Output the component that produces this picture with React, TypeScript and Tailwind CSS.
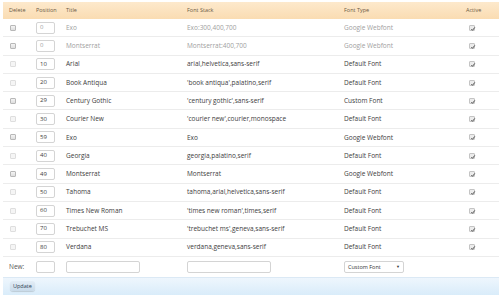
import React from 'react';

type Font = {
  pos: string;
  title: string;
  stack: string;
  type: string;
  muted?: boolean;
  removable?: boolean;
};

const fonts: Font[] = [
  { pos: '0', title: 'Exo', stack: 'Exo:300,400,700', type: 'Google Webfont', muted: true, removable: true },
  { pos: '0', title: 'Montserrat', stack: 'Montserrat:400,700', type: 'Google Webfont', muted: true, removable: true },
  { pos: '10', title: 'Arial', stack: 'arial,helvetica,sans-serif', type: 'Default Font' },
  { pos: '20', title: 'Book Antiqua', stack: "'book antiqua',palatino,serif", type: 'Default Font' },
  { pos: '29', title: 'Century Gothic', stack: "'century gothic',sans-serif", type: 'Custom Font', removable: true },
  { pos: '30', title: 'Courier New', stack: "'courier new',courier,monospace", type: 'Default Font' },
  { pos: '59', title: 'Exo', stack: 'Exo', type: 'Google Webfont', removable: true },
  { pos: '40', title: 'Georgia', stack: 'georgia,palatino,serif', type: 'Default Font' },
  { pos: '49', title: 'Montserrat', stack: 'Montserrat', type: 'Google Webfont', removable: true },
  { pos: '50', title: 'Tahoma', stack: 'tahoma,arial,helvetica,sans-serif', type: 'Default Font' },
  { pos: '60', title: 'Times New Roman', stack: "'times new roman',times,serif", type: 'Default Font' },
  { pos: '70', title: 'Trebuchet MS', stack: "'trebuchet ms',geneva,sans-serif", type: 'Default Font' },
  { pos: '80', title: 'Verdana', stack: 'verdana,geneva,sans-serif', type: 'Default Font' },
];

const grid = 'grid grid-cols-[30px_30px_121px_157px_122px_1fr] items-center';

const Box = ({ light }: { light?: boolean }) => (
  <span
    className={`block w-[6px] h-[6px] rounded-[1px] border ${
      light ? 'border-[#dedede] bg-[#f5f5f5]' : 'border-[#b8b8b8] bg-gradient-to-b from-[#f4f4f4] to-[#dedede]'
    }`}
  />
);

const Checked = () => (
  <span className="block w-[6px] h-[6px] rounded-[1px] border border-[#c4c4c4] bg-[#ececec] relative">
    <svg viewBox="0 0 6 6" className="absolute inset-0 w-[6px] h-[6px]">
      <path d="M1.3 3.1 L2.5 4.3 L4.8 1.4" stroke="#444" strokeWidth="0.9" fill="none" />
    </svg>
  </span>
);

export default function App() {
  return (
    <div className="w-[502px] h-[300px] bg-white pt-[2px] px-[3px]" style={{ fontFamily: '"Open Sans", sans-serif' }}>
      <div className={`${grid} h-[17px] bg-gradient-to-b from-[#fde9cc] to-[#fadcb2] text-[5.5px] text-[#6b5a45]`}>
        <span className="pl-[6px]">Delete</span>
        <span className="pl-[3px]">Position</span>
        <span className="pl-[3px]">Title</span>
        <span className="pl-[3px]">Font Stack</span>
        <span className="pl-[3px]">Font Type</span>
        <span className="pl-[3px]">Active</span>
      </div>
      {fonts.map((f, i) => (
        <div
          key={i}
          className={`${grid} h-[18.3px] border-b border-[#ececec] text-[6.5px] ${f.muted ? 'text-[#a0a0a0]' : 'text-[#3c3c3c]'}`}
        >
          <span className="pl-[7px]">
            <Box light={!f.removable} />
          </span>
          <span className="pl-[3px]">
            <span className="flex items-center w-[19px] h-[12px] border border-[#d4d4d4] rounded-[2px] bg-white pl-[3px] text-[6px]">
              {f.pos}
            </span>
          </span>
          <span className="pl-[3px]">{f.title}</span>
          <span className="pl-[3px]">{f.stack}</span>
          <span className="pl-[3px]">{f.type}</span>
          <span className="pl-[6px]">
            <Checked />
          </span>
        </div>
      ))}
      <div className={`${grid} h-[20px] text-[6.5px] text-[#555]`}>
        <span className="pl-[6px]">New:</span>
        <span className="pl-[3px]">
          <span className="block w-[19px] h-[12px] border border-[#d4d4d4] rounded-[2px] bg-white" />
        </span>
        <span className="pl-[3px]">
          <span className="block w-[74px] h-[12px] border border-[#d4d4d4] rounded-[2px] bg-white" />
        </span>
        <span className="pl-[3px]">
          <span className="block w-[84px] h-[12px] border border-[#d4d4d4] rounded-[2px] bg-white" />
        </span>
        <span className="pl-[3px]">
          <span className="flex items-center justify-between w-[60px] h-[12px] border border-[#d4d4d4] rounded-[2px] bg-white px-[3px] text-[5.5px] text-[#333]">
            Custom Font
            <span className="text-[4px]">▼</span>
          </span>
        </span>
        <span />
      </div>
      <div className="h-[18px] flex items-center pl-[7px] bg-gradient-to-b from-[#eef6fd] to-[#d9ecfa] border-t border-[#dbe9f5]">
        <span className="px-[3px] h-[10px] flex items-center rounded-[3px] bg-gradient-to-b from-[#e3edf6] to-[#c9dbea] text-[5.5px] text-[#2d3e50] shadow-[0_1px_1px_rgba(0,0,0,0.15)]">
          Update
        </span>
      </div>
    </div>
  );
}
